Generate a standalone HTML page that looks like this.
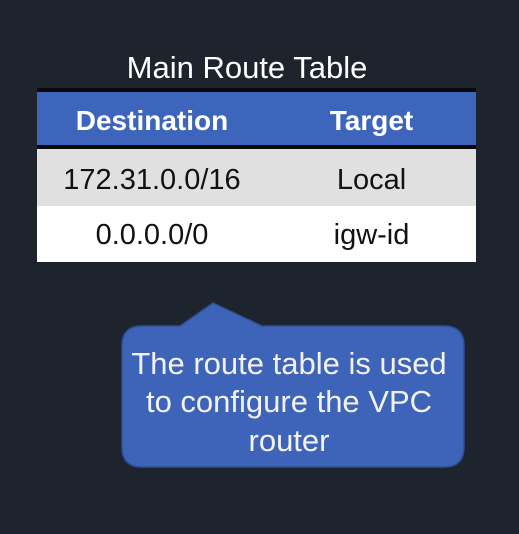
<!DOCTYPE html>
<html><head><style>
body{margin:0;width:519px;height:534px;background:#1e242e;font-family:"Liberation Sans",sans-serif;position:relative;overflow:hidden}
.t{position:absolute;left:0;width:494px;text-align:center;top:50px;font-size:31px;color:#fff}
.row{position:absolute;left:37px;width:439px;font-size:29px;}
.row span{position:absolute;top:0;text-align:center}
.c1{left:6px;width:218px}.c2{left:224px;width:221px}
</style></head><body>
<div class="t">Main Route Table</div>
<div style="position:absolute;left:37px;top:88px;width:439px;height:4px;background:#0a0a0a"></div>
<div class="row" style="top:92px;height:53px;background:#3d65bb;color:#fff;font-weight:bold;line-height:57px;font-size:28px"><span class="c1">Destination</span><span class="c2">Target</span></div>
<div style="position:absolute;left:37px;top:145px;width:439px;height:4px;background:#0a0a0a"></div>
<div class="row" style="top:149px;height:57px;background:#e0e0e0;color:#111;line-height:62px"><span class="c1">172.31.0.0/16</span><span class="c2">Local</span></div>
<div class="row" style="top:206px;height:56px;background:#fff;color:#111;line-height:58px"><span class="c1">0.0.0.0/0</span><span class="c2">igw-id</span></div>
<svg style="position:absolute;left:0;top:0" width="519" height="534">
<path d="M142 326 L180 326 L213 303 L262 326 L444 326 Q464 326 464 346 L464 447 Q464 467 444 467 L142 467 Q122 467 122 447 L122 346 Q122 326 142 326 Z" fill="#3d64b8" stroke="#2f4f94" stroke-width="1.5"/>
<g fill="#f2f2f2" font-family="Liberation Sans, sans-serif" font-size="31" text-anchor="middle">
<text x="289" y="374">The route table is used</text>
<text x="289" y="412">to configure the VPC</text>
<text x="289" y="451">router</text>
</g>
</svg>
</body></html>
